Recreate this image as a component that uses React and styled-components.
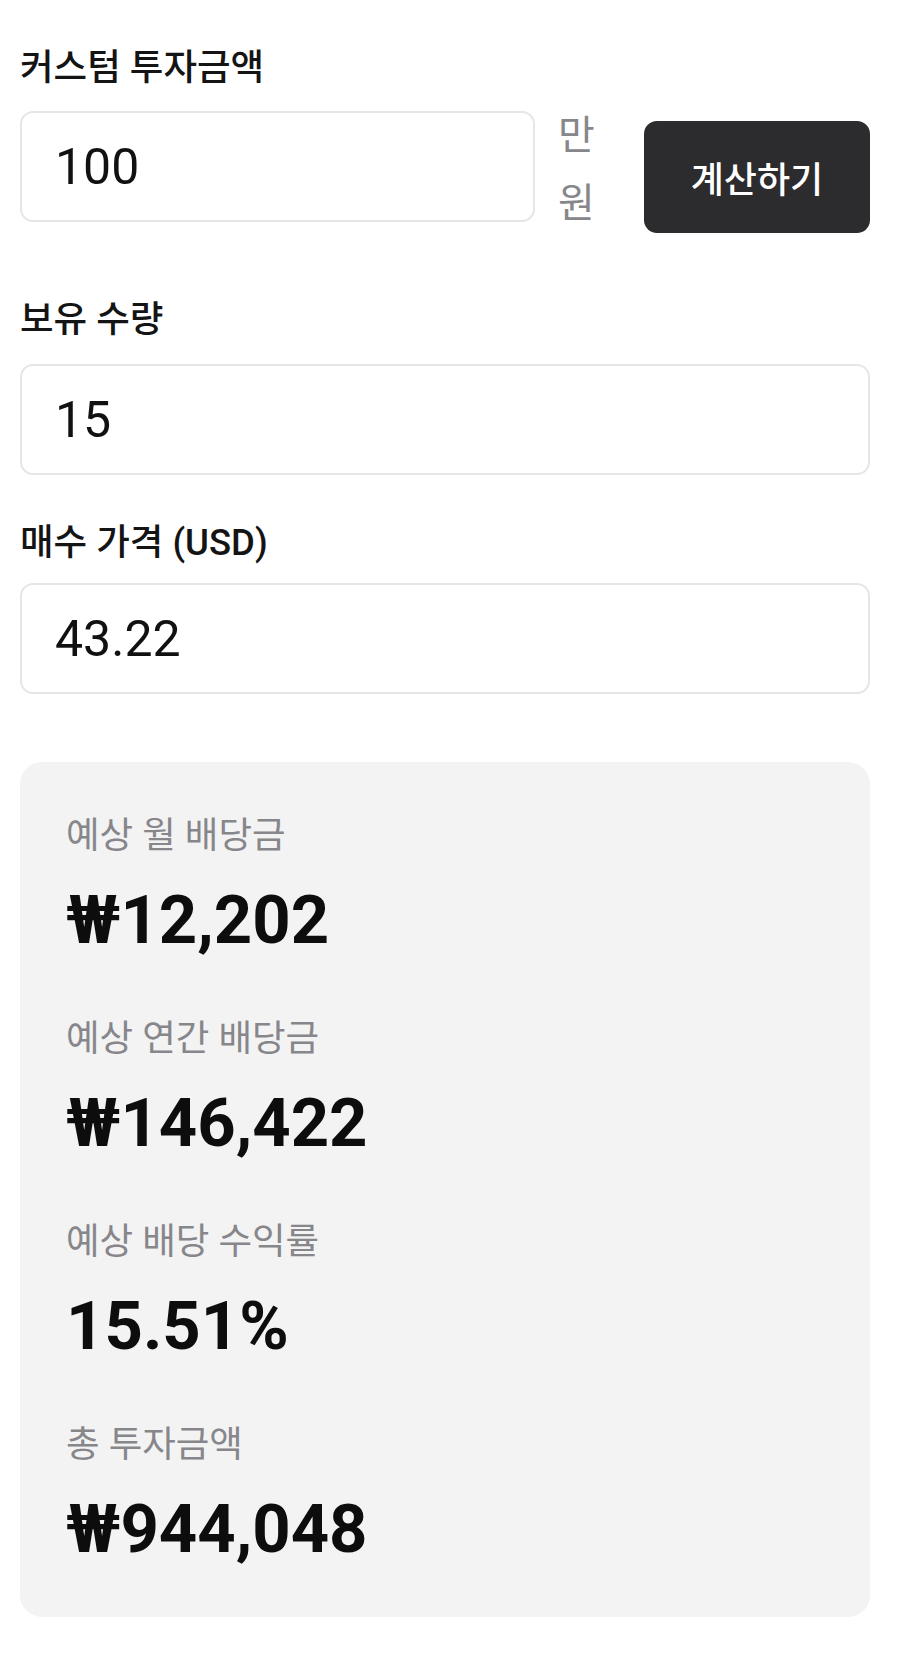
import React from "react";
import styled, { createGlobalStyle } from "styled-components";

const Global = createGlobalStyle`
  html, body { margin: 0; padding: 0; background: #ffffff; }
  body { font-family: Roboto, "Noto Sans CJK KR", sans-serif; color: #111111; }
  * { box-sizing: border-box; }
`;

const Page = styled.div`
  width: 905px;
  padding: 46px 35px 58px 20px;
  display: flex;
  flex-direction: column;
`;

const Field = styled.div`
  display: flex;
  flex-direction: column;
  gap: ${(p) => p.$gap || 23}px;
  margin-bottom: ${(p) => p.$mb || 0}px;
`;

const Label = styled.label`
  font-size: 36.5px;
  line-height: 44px;
  font-weight: 500;
  color: #141414;
  font-family: Roboto, "Noto Sans CJK KR", sans-serif;
`;

const Row = styled.div`
  display: flex;
  align-items: flex-start;
`;

const Input = styled.input`
  flex: ${(p) => (p.$grow ? "1 1 auto" : "none")};
  width: ${(p) => (p.$grow ? "auto" : "100%")};
  min-width: 0;
  height: 111px;
  border: 2px solid #e6e6e6;
  border-radius: 13px;
  background: #ffffff;
  padding: 0 33px;
  font-family: Roboto, sans-serif;
  font-size: 50px;
  color: #111111;
  outline: none;
`;

const Unit = styled.span`
  width: 42px;
  margin: -13px 44px 0 23px;
  font-size: 40px;
  line-height: 68px;
  color: #87878b;
  font-family: "Noto Sans CJK KR", sans-serif;
  flex: none;
`;

const Button = styled.button`
  width: 226px;
  height: 112px;
  margin-top: 10px;
  border: none;
  border-radius: 13px;
  background: #2c2c2e;
  color: #ffffff;
  font-family: "Noto Sans CJK KR", sans-serif;
  font-size: 36px;
  font-weight: 500;
  flex: none;
`;

const Card = styled.div`
  margin-top: 68px;
  background: #f3f3f3;
  border-radius: 22px;
  padding: 52px 46px 46px;
  display: flex;
  flex-direction: column;
  gap: 55px;
`;

const Stat = styled.div`
  display: flex;
  flex-direction: column;
  gap: 20px;
`;

const StatLabel = styled.div`
  font-size: 36.5px;
  line-height: 44px;
  color: #86868b;
  font-family: Roboto, "Noto Sans CJK KR", sans-serif;
`;

const StatValue = styled.div`
  font-size: 67px;
  line-height: 84px;
  font-weight: 700;
  color: #0d0d0d;
  font-family: Roboto, sans-serif;
`;

const stats = [
  ["예상 월 배당금", "₩12,202"],
  ["예상 연간 배당금", "₩146,422"],
  ["예상 배당 수익률", "15.51%"],
  ["총 투자금액", "₩944,048"],
];

export default function App() {
  return (
    <>
      <Global />
      <Page>
        <Field $gap={21} $mb={64}>
          <Label>커스텀 투자금액</Label>
          <Row>
            <Input $grow defaultValue="100" />
            <Unit>만 원</Unit>
            <Button>계산하기</Button>
          </Row>
        </Field>
        <Field $gap={22} $mb={46}>
          <Label>보유 수량</Label>
          <Input defaultValue="15" />
        </Field>
        <Field $gap={18}>
          <Label>매수 가격 (USD)</Label>
          <Input defaultValue="43.22" />
        </Field>
        <Card>
          {stats.map(([l, v]) => (
            <Stat key={l}>
              <StatLabel>{l}</StatLabel>
              <StatValue>{v}</StatValue>
            </Stat>
          ))}
        </Card>
      </Page>
    </>
  );
}
